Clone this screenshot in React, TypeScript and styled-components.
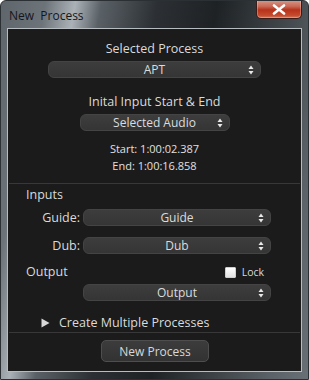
import React from 'react'
import styled, { createGlobalStyle } from 'styled-components'

const GlobalStyle = createGlobalStyle`
  html, body {
    margin: 0;
    padding: 0;
    background: #ffffff;
  }
  body {
    font-family: 'Open Sans', 'Liberation Sans', sans-serif;
  }
`

const SelectArrows = () => (
  <svg width="6" height="10" viewBox="0 0 6 10">
    <path d="M3 0.5 L5.5 4 L0.5 4 Z" fill="#e8e8e8" />
    <path d="M0.5 6 L5.5 6 L3 9.5 Z" fill="#e8e8e8" />
  </svg>
)

type SelectProps = {
  value: string
  width: number
}

const DropDown = ({ value, width }: SelectProps) => (
  <SelectBox $width={width}>
    <span>{value}</span>
    <ArrowSlot>
      <SelectArrows />
    </ArrowSlot>
  </SelectBox>
)

const App = () => {
  return (
    <>
      <GlobalStyle />
      <Window>
        <TitleBar>
          <Title>New  Process</Title>
          <CloseButton>
            <svg width="14" height="11" viewBox="0 0 14 11">
              <path
                d="M2 1.5 L12 9.5 M12 1.5 L2 9.5"
                stroke="#ffffff"
                strokeWidth="2.6"
                strokeLinecap="round"
              />
            </svg>
          </CloseButton>
        </TitleBar>

        <Panel>
          <CenterBlock>
            <Heading>Selected Process</Heading>
            <DropDown value="APT" width={213} />
            <Heading $top={15}>Inital Input Start &amp; End</Heading>
            <DropDown value="Selected Audio" width={150} />
            <TimeLine $top={9}>Start: 1:00:02.387</TimeLine>
            <TimeLine>End: 1:00:16.858</TimeLine>
          </CenterBlock>

          <Divider />

          <SectionTitle>Inputs</SectionTitle>
          <FieldRow>
            <FieldLabel>Guide:</FieldLabel>
            <DropDown value="Guide" width={188} />
          </FieldRow>
          <FieldRow $top={11}>
            <FieldLabel>Dub:</FieldLabel>
            <DropDown value="Dub" width={188} />
          </FieldRow>

          <OutputHeader>
            <SectionTitle>Output</SectionTitle>
            <LockWrap>
              <CheckBox />
              <LockText>Lock</LockText>
            </LockWrap>
          </OutputHeader>
          <FieldRow $top={4}>
            <FieldLabel />
            <DropDown value="Output" width={188} />
          </FieldRow>

          <Disclosure>
            <svg width="9" height="10" viewBox="0 0 9 10">
              <path d="M0.5 0.5 L8.5 5 L0.5 9.5 Z" fill="#d8d8d8" />
            </svg>
            <span>Create Multiple Processes</span>
          </Disclosure>

          <Divider />

          <Footer>
            <ActionButton>New Process</ActionButton>
          </Footer>
        </Panel>
      </Window>
    </>
  )
}

export default App

/* Janela */

const Window = styled.div`
  width: 309px;
  height: 380px;
  box-sizing: border-box;
  display: flex;
  flex-direction: column;
  border: 1px solid #2b3034;
  border-radius: 6px 6px 0 0;
  background:
    linear-gradient(
      100deg,
      #5f666b 0%,
      #6d7479 12%,
      #aab2b8 20%,
      #5a6166 27%,
      #2c3034 42%,
      #1e2225 58%,
      #3d4347 75%,
      #5c6368 90%,
      #687076 100%
    );
  overflow: hidden;
`

const TitleBar = styled.div`
  height: 27px;
  flex: 0 0 27px;
  display: flex;
  align-items: flex-start;
  justify-content: space-between;
  padding: 0 6px 0 8px;
`

const Title = styled.div`
  margin-top: 6px;
  font-family: 'Open Sans', 'Liberation Sans', sans-serif;
  font-size: 12px;
  color: #15161c;
  white-space: pre;
`

const CloseButton = styled.div`
  width: 46px;
  height: 19px;
  margin-top: -1px;
  box-sizing: border-box;
  display: flex;
  align-items: center;
  justify-content: center;
  border: 1px solid #3a1c18;
  border-top: none;
  border-radius: 0 0 5px 5px;
  background: linear-gradient(
    180deg,
    #d89a8c 0%,
    #c86a56 35%,
    #b8321c 55%,
    #c44a2c 85%,
    #d0785c 100%
  );
  box-shadow: inset 0 0 0 1px rgba(255, 210, 200, 0.35);
`

const Panel = styled.div`
  flex: 1;
  margin: 0 6px 7px 6px;
  border: 1px solid #b7bcc0;
  background: #1b1b1b;
  display: flex;
  flex-direction: column;
  color: #d8d8d8;
  font-family: 'Open Sans', 'Liberation Sans', sans-serif;
`

/* Blocos */

const CenterBlock = styled.div`
  display: flex;
  flex-direction: column;
  align-items: center;
  padding-top: 11px;
  padding-bottom: 9px;
`

const Heading = styled.div<{ $top?: number }>`
  font-size: 12.5px;
  line-height: 17px;
  margin-top: ${(p) => p.$top ?? 0}px;
  margin-bottom: 4px;
  color: #dadada;
`

const TimeLine = styled.div<{ $top?: number }>`
  font-size: 11px;
  font-weight: 500;
  line-height: 17px;
  margin-top: ${(p) => p.$top ?? 0}px;
  color: #e0e0e0;
`

const SelectBox = styled.div<{ $width: number }>`
  position: relative;
  width: ${(p) => p.$width}px;
  height: 17px;
  box-sizing: border-box;
  display: flex;
  align-items: center;
  justify-content: center;
  border: 1px solid #444444;
  border-radius: 6px;
  background: linear-gradient(180deg, #3d3d3d 0%, #353535 100%);
  font-size: 12px;
  color: #dcdcdc;
`

const ArrowSlot = styled.span`
  position: absolute;
  right: 6px;
  top: 3px;
  display: flex;
`

const Divider = styled.div`
  height: 1px;
  background: #383838;
  margin: 0 1px;
`

const SectionTitle = styled.div`
  font-size: 12.5px;
  line-height: 17px;
  padding-left: 18px;
  margin-top: 2px;
  color: #dadada;
`

const FieldRow = styled.div<{ $top?: number }>`
  display: flex;
  align-items: center;
  margin-top: ${(p) => p.$top ?? 6}px;
`

const FieldLabel = styled.div`
  width: 72px;
  padding-right: 3px;
  text-align: right;
  font-size: 12.5px;
  color: #dadada;
`

const OutputHeader = styled.div`
  display: flex;
  align-items: center;
  justify-content: space-between;
  margin-top: 7px;
  padding-right: 37px;
`

const LockWrap = styled.div`
  display: flex;
  align-items: center;
  gap: 6px;
  margin-top: 3px;
`

const CheckBox = styled.div`
  width: 9px;
  height: 9px;
  border: 1px solid #cfcfcf;
  background: linear-gradient(180deg, #ffffff 0%, #e2e2e2 100%);
  border-radius: 1px;
`

const LockText = styled.span`
  font-size: 10.5px;
  color: #d8d8d8;
`

const Disclosure = styled.div`
  display: flex;
  align-items: center;
  gap: 9px;
  padding-left: 33px;
  margin-top: 13px;
  margin-bottom: 1px;
  font-size: 12.5px;
  line-height: 17px;
  color: #dadada;
`

const Footer = styled.div`
  display: flex;
  justify-content: center;
  padding-top: 7px;
  padding-left: 1px;
`

const ActionButton = styled.button`
  width: 108px;
  height: 22px;
  border: 1px solid #4e4e4e;
  border-radius: 5px;
  background: linear-gradient(180deg, #3c3c3c 0%, #323232 100%);
  color: #d8d8d8;
  font-family: 'Open Sans', 'Liberation Sans', sans-serif;
  font-size: 12px;
  padding: 0;
  cursor: pointer;
`
